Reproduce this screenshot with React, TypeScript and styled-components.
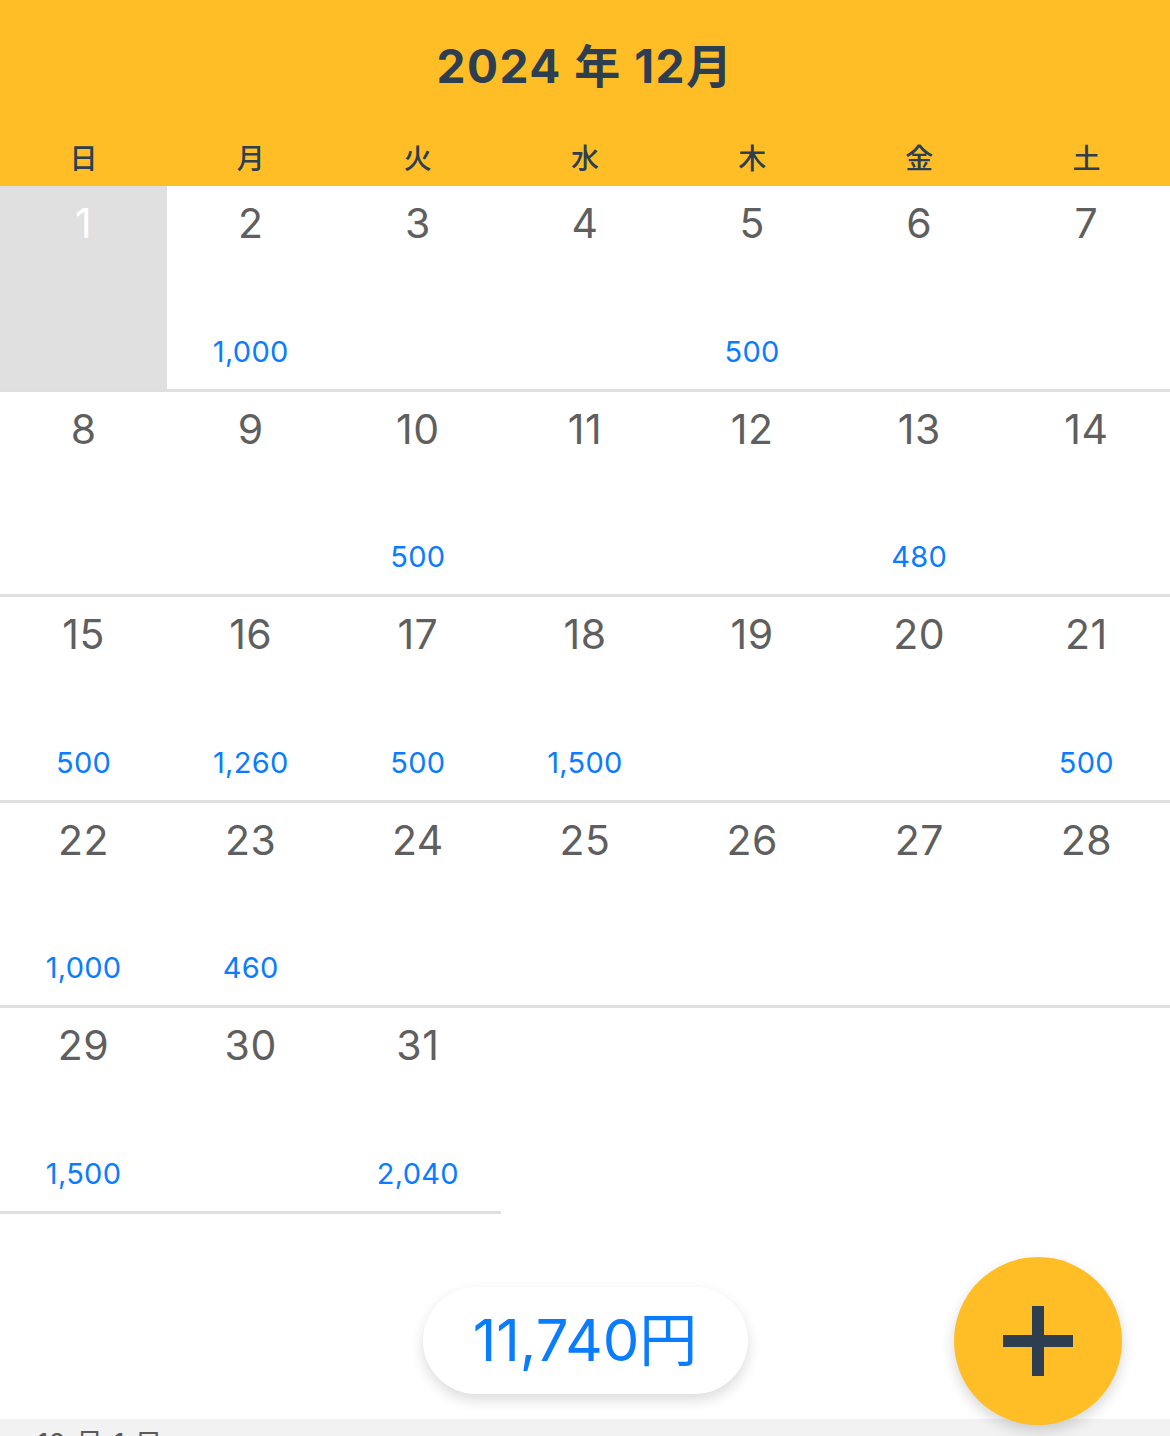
import React from "react";
import styled, { createGlobalStyle } from "styled-components";

const GlobalStyle = createGlobalStyle`
  html, body {
    margin: 0;
    padding: 0;
    background: #ffffff;
    font-family: Inter, "Noto Sans CJK JP", sans-serif;
  }
  * {
    box-sizing: border-box;
  }
`;

const YELLOW = "#ffbe26";
const NAVY = "#2c3e50";
const BLUE = "#0a7cff";

type Day = {
  date: number;
  amount?: number;
};

const amounts: Record<number, number> = {
  2: 1000,
  5: 500,
  10: 500,
  13: 480,
  15: 500,
  16: 1260,
  17: 500,
  18: 1500,
  21: 500,
  22: 1000,
  23: 460,
  29: 1500,
  31: 2040,
};

const days: Day[] = Array.from({ length: 31 }, (_, i) => ({
  date: i + 1,
  amount: amounts[i + 1],
}));

const weekdays = ["日", "月", "火", "水", "木", "金", "土"];

const Screen = styled.div`
  position: relative;
  width: 1170px;
  height: 1436px;
  overflow: hidden;
  display: flex;
  flex-direction: column;
`;

const Header = styled.header`
  background: ${YELLOW};
  color: ${NAVY};
  height: 186px;
  display: flex;
  flex-direction: column;
`;

const Title = styled.h1`
  margin: 0;
  padding-top: 33px;
  height: 128px;
  text-align: center;
  font-size: 46px;
  font-weight: 700;
  line-height: 66px;
  letter-spacing: 1.5px;
`;

const WeekRow = styled.div`
  display: grid;
  grid-template-columns: repeat(7, 1fr);
`;

const WeekLabel = styled.div`
  text-align: center;
  font-family: "Noto Sans CJK JP", sans-serif;
  font-size: 28px;
  font-weight: 500;
  line-height: 58px;
  height: 58px;
`;

const Grid = styled.div`
  display: grid;
  grid-template-columns: repeat(7, 1fr);
  grid-auto-rows: 205.5px;
`;

const Cell = styled.div<{ $selected?: boolean }>`
  display: flex;
  flex-direction: column;
  align-items: center;
  border-bottom: 3px solid #dfdfdf;
  background: ${(p) => (p.$selected ? "#e0e0e0" : "#ffffff")};
`;

const DayNum = styled.div<{ $selected?: boolean }>`
  margin-top: 12px;
  font-size: 41px;
  line-height: 50px;
  letter-spacing: 0.5px;
  color: ${(p) => (p.$selected ? "#ffffff" : "#5f5f5f")};
`;

const Amount = styled.div`
  margin-top: auto;
  margin-bottom: 18px;
  font-size: 29px;
  line-height: 38px;
  letter-spacing: 0.3px;
  color: ${BLUE};
`;

const Footer = styled.div`
  flex: 1;
  display: flex;
  justify-content: center;
  align-items: flex-start;
  padding-top: 73px;
`;

const TotalPill = styled.div`
  width: 325px;
  height: 107px;
  border-radius: 54px;
  background: #ffffff;
  box-shadow: 0 6px 14px rgba(0, 0, 0, 0.14);
  display: flex;
  align-items: center;
  justify-content: center;
  color: ${BLUE};
  font-size: 58px;
  line-height: 1;
`;

const DetailStrip = styled.div`
  height: 17px;
  background: #f2f2f2;
  overflow: hidden;
  padding: 5px 0 0 37px;
  font-size: 28px;
  line-height: 40px;
  word-spacing: 2px;
  color: #5a5a5a;
`;

const Fab = styled.button`
  position: absolute;
  right: 48px;
  bottom: 11px;
  width: 168px;
  height: 168px;
  border: none;
  border-radius: 50%;
  background: ${YELLOW};
  box-shadow: 0 6px 14px rgba(0, 0, 0, 0.16);
  display: flex;
  align-items: center;
  justify-content: center;
  padding: 0;
  cursor: pointer;
`;

const formatAmount = (n: number) => n.toLocaleString("en-US");

export default function App() {
  const total = days.reduce((sum, d) => sum + (d.amount ?? 0), 0);

  return (
    <>
      <GlobalStyle />
      <Screen>
        <Header>
          <Title>2024 年 12月</Title>
          <WeekRow>
            {weekdays.map((w) => (
              <WeekLabel key={w}>{w}</WeekLabel>
            ))}
          </WeekRow>
        </Header>
        <Grid>
          {days.map((d) => (
            <Cell key={d.date} $selected={d.date === 1}>
              <DayNum $selected={d.date === 1}>{d.date}</DayNum>
              {d.amount !== undefined && <Amount>{formatAmount(d.amount)}</Amount>}
            </Cell>
          ))}
        </Grid>
        <Footer>
          <TotalPill>{formatAmount(total)}円</TotalPill>
        </Footer>
        <DetailStrip>12 月 1 日</DetailStrip>
        <Fab aria-label="追加">
          <svg width="70" height="70" viewBox="0 0 70 70">
            <rect x="0" y="29" width="70" height="12" fill={NAVY} />
            <rect x="29" y="0" width="12" height="70" fill={NAVY} />
          </svg>
        </Fab>
      </Screen>
    </>
  );
}
